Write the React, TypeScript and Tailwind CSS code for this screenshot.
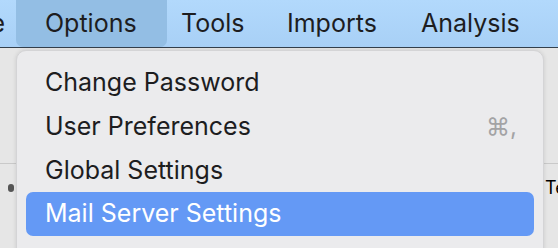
import React from "react";

export default function App() {
  const font = { fontFamily: "Inter, 'Noto Sans', sans-serif" };
  return (
    <div className="relative w-[558px] h-[248px] overflow-hidden bg-[#e6e6e6]" style={font}>
      {/* menu bar */}
      <div className="h-[48px] flex items-stretch bg-gradient-to-b from-[#b2d9fc] to-[#a8d0f6] border-b-[1.5px] border-[#34404c] text-[25px] text-[#1d1d1f]">
        <div className="w-[16px] flex items-center justify-end overflow-hidden">
          <span className="mr-[11px]">e</span>
        </div>
        <div className="w-[151px] shrink-0 flex items-center pl-[29px] bg-[#93bee4] rounded-b-[7px]">Options</div>
        <div className="w-[120px] shrink-0 flex items-center pl-[14px]">Tools</div>
        <div className="w-[134px] shrink-0 flex items-center">Imports</div>
        <div className="flex items-center whitespace-nowrap">Analysis</div>
      </div>
      {/* background content */}
      <div className="absolute left-0 right-0 top-[163px] h-[1px] bg-[#c9c9c9]" />
      <div className="absolute left-[8px] top-[184px] w-[6px] h-[8px] rounded-sm bg-[#555]" />
      <div className="absolute left-[545px] top-[179px] text-[18px] text-black leading-none">Te</div>
      {/* dropdown */}
      <div className="absolute left-[16px] top-[50px] w-[528px] h-[220px] bg-[#ebebed] rounded-t-[10px] border border-[#d4d4d6] shadow-[0_0_4px_rgba(0,0,0,0.12)] px-[9px] pt-[10px] text-[25px] text-[#1d1d1f]">
        <div className="h-[44px] flex items-center pl-[19px]">Change Password</div>
        <div className="h-[44px] flex items-center pl-[19px] pr-[17px] justify-between">
          <span>User Preferences</span>
          <span className="text-[#a3a3a5] text-[24px]">⌘,</span>
        </div>
        <div className="h-[43px] flex items-center pl-[19px]">Global Settings</div>
        <div className="h-[44px] flex items-center pl-[19px] bg-[#6499f5] text-white rounded-[7px]">Mail Server Settings</div>
      </div>
    </div>
  );
}
